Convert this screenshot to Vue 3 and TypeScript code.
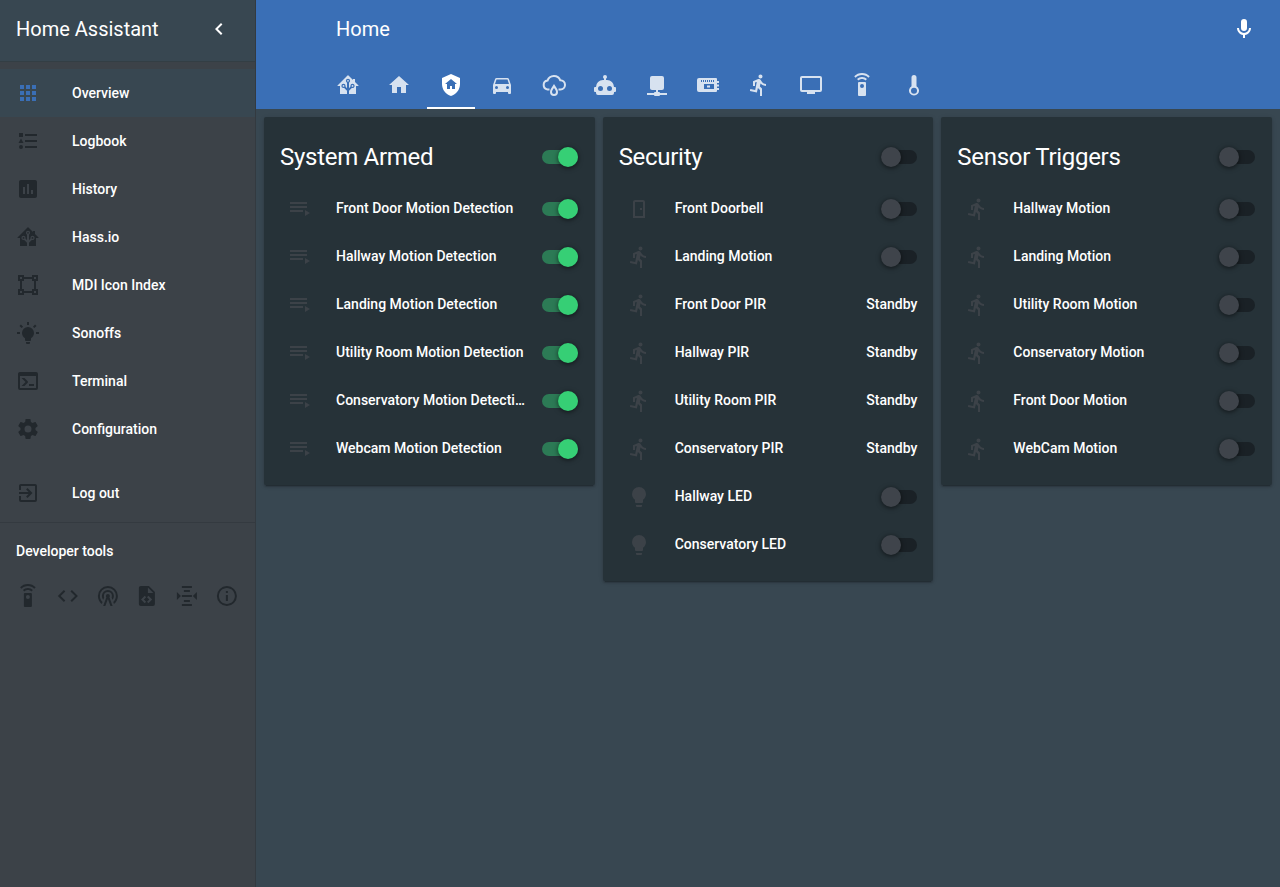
<template>
  <div class="shell">
    <aside class="sidebar">
      <div class="side-head">
        <span class="side-title">Home Assistant</span>
        <svg class="chevron" viewBox="0 0 24 24"><path :d="ICONS.chevron" /></svg>
      </div>
      <nav class="side-nav">
        <a v-for="item in NAV" :key="item.label" :class="['side-item', { active: item.active }]">
          <svg class="side-icon" viewBox="0 0 24 24"><path :d="ICONS[item.icon]" /></svg>
          <span>{{ item.label }}</span>
        </a>
      </nav>
      <a class="side-item logout">
        <svg class="side-icon" viewBox="0 0 24 24"><path :d="ICONS.logout" /></svg>
        <span>Log out</span>
      </a>
      <div class="dev-title">Developer tools</div>
      <div class="dev-tools">
        <svg v-for="t in DEV_TOOLS" :key="t" class="dev-icon" viewBox="0 0 24 24"><path :d="ICONS[t]" /></svg>
      </div>
    </aside>

    <div class="content">
      <header class="topbar">
        <div class="top-row">
          <span class="top-title">Home</span>
          <svg class="mic" viewBox="0 0 24 24"><path :d="ICONS.mic" /></svg>
        </div>
        <div class="tabs">
          <div v-for="(t, i) in TABS" :key="t" :class="['tab', { selected: i === 2 }]">
            <svg v-if="t === 'cloudDrop'" class="tab-icon" viewBox="0 0 24 24">
              <path class="line" d="M7.5 16.5H5.5A4.5 4.5 0 0 1 5.5 7.6 6.8 6.8 0 0 1 18.3 7.3 4.6 4.6 0 0 1 18.5 16.5H16.5" />
              <path d="M12 11C14 14 16 16.5 16 19A4 4 0 0 1 8 19C8 16.5 10 14 12 11ZM12 15C11 16.5 10 17.8 10 19A2 2 0 0 0 14 19C14 17.8 13 16.5 12 15Z" fill-rule="evenodd" />
            </svg>
            <svg v-else class="tab-icon" viewBox="0 0 24 24"><path :d="ICONS[t]" fill-rule="evenodd" /></svg>
          </div>
        </div>
      </header>

      <main class="cards">
        <section v-for="card in CARDS" :key="card.title" class="card">
          <div class="card-head">
            <h2>{{ card.title }}</h2>
            <div :class="['toggle', { on: card.on }]"><i /></div>
          </div>
          <div v-for="row in card.rows" :key="row.name" class="row">
            <span class="badge">
              <svg viewBox="0 0 24 24"><path :d="ICONS[row.icon]" /></svg>
            </span>
            <span class="name">{{ row.name }}</span>
            <span v-if="row.state" class="state">{{ row.state }}</span>
            <div v-else :class="['toggle', { on: card.on }]"><i /></div>
          </div>
        </section>
      </main>
    </div>
  </div>
</template>

<script setup lang="ts">
interface Row {
  name: string
  icon: string
  state?: string
}

const ICONS: Record<string, string> = {
  chevron: 'M15.41,16.58L10.83,12L15.41,7.41L14,6L8,12L14,18L15.41,16.58Z',
  mic: 'M12,2A3,3 0 0,1 15,5V11A3,3 0 0,1 12,14A3,3 0 0,1 9,11V5A3,3 0 0,1 12,2M19,11C19,14.53 16.39,17.44 13,17.93V21H11V17.93C7.61,17.44 5,14.53 5,11H7A5,5 0 0,0 12,16A5,5 0 0,0 17,11H19Z',
  apps: 'M16,20H20V16H16M16,14H20V10H16M10,8H14V4H10M16,8H20V4H16M10,14H14V10H10M4,14H8V10H4M4,20H8V16H4M10,20H14V16H10M4,8H8V4H4V8Z',
  logbook: 'M5,9.5L7.5,14H2.5L5,9.5M3,4H7V8H3V4M5,20A2,2 0 0,0 7,18A2,2 0 0,0 5,16A2,2 0 0,0 3,18A2,2 0 0,0 5,20M9,5V7H21V5H9M9,19H21V17H9V19M9,13H21V11H9V13Z',
  history: 'M9 17H7V10H9V17M13 17H11V7H13V17M17 17H15V13H17V17M19 3H5C3.89 3 3 3.89 3 5V19C3 20.1 3.89 21 5 21H19C20.1 21 21 20.1 21 19V5C21 3.89 20.1 3 19 3Z',
  hass: 'M21.8,13H20V21H13V17.67L15.79,14.88L16.5,15C17.66,15 18.6,14.06 18.6,12.9C18.6,11.74 17.66,10.8 16.5,10.8A2.1,2.1 0 0,0 14.4,12.9L14.5,13.61L13,15.13V9.65C13.66,9.29 14.1,8.6 14.1,7.8A2.1,2.1 0 0,0 12,5.7A2.1,2.1 0 0,0 9.9,7.8C9.9,8.6 10.34,9.29 11,9.65V15.13L9.5,13.61L9.6,12.9A2.1,2.1 0 0,0 7.5,10.8A2.1,2.1 0 0,0 5.4,12.9A2.1,2.1 0 0,0 7.5,15L8.21,14.88L11,17.67V21H4V13H2.25C1.83,13 1.42,13 1.42,12.79C1.43,12.57 1.85,12.15 2.28,11.72L11,3C11.33,2.67 11.67,2.33 12,2.33C12.33,2.33 12.67,2.67 13,3L17,7V6H19V9L21.78,11.78C22.18,12.18 22.59,12.59 22.6,12.8C22.6,13 22.2,13 21.8,13M7.5,12A0.9,0.9 0 0,1 8.4,12.9A0.9,0.9 0 0,1 7.5,13.8A0.9,0.9 0 0,1 6.6,12.9A0.9,0.9 0 0,1 7.5,12M16.5,12C17,12 17.4,12.4 17.4,12.9C17.4,13.4 17,13.8 16.5,13.8A0.9,0.9 0 0,1 15.6,12.9A0.9,0.9 0 0,1 16.5,12M12,6.9C12.5,6.9 12.9,7.3 12.9,7.8C12.9,8.3 12.5,8.7 12,8.7C11.5,8.7 11.1,8.3 11.1,7.8C11.1,7.3 11.5,6.9 12,6.9Z',
  vector: 'M2,2H8V4H16V2H22V8H20V16H22V22H16V20H8V22H2V16H4V8H2V2M16,8V6H8V8H6V16H8V18H16V16H18V8H16M4,4V6H6V4H4M18,4V6H20V4H18M4,18V20H6V18H4M18,18V20H20V18H18Z',
  bulbOn: 'M12,6A6,6 0 0,1 18,12C18,14.22 16.79,16.16 15,17.2V19A1,1 0 0,1 14,20H10A1,1 0 0,1 9,19V17.2C7.21,16.16 6,14.22 6,12A6,6 0 0,1 12,6M14,21V22A1,1 0 0,1 13,23H11A1,1 0 0,1 10,22V21H14M20,11H23V13H20V11M1,11H4V13H1V11M13,1V4H11V1H13M4.92,3.5L7.05,5.64L5.63,7.05L3.5,4.93L4.92,3.5M16.95,5.63L19.07,3.5L20.5,4.93L18.37,7.05L16.95,5.63Z',
  console: 'M20,19V7H4V19H20M20,3A2,2 0 0,1 22,5V19A2,2 0 0,1 20,21H4A2,2 0 0,1 2,19V5C2,3.89 2.9,3 4,3H20M13,17V15H18V17H13M9.58,13L5.57,9H8.4L11.7,12.3C12.09,12.69 12.09,13.33 11.7,13.72L8.42,17H5.59L9.58,13Z',
  cog: 'M12,15.5A3.5,3.5 0 0,1 8.5,12A3.5,3.5 0 0,1 12,8.5A3.5,3.5 0 0,1 15.5,12A3.5,3.5 0 0,1 12,15.5M19.43,12.97C19.47,12.65 19.5,12.33 19.5,12C19.5,11.67 19.47,11.34 19.43,11L21.54,9.37C21.73,9.22 21.78,8.95 21.66,8.73L19.66,5.27C19.54,5.05 19.27,4.96 19.05,5.05L16.56,6.05C16.04,5.66 15.5,5.32 14.87,5.07L14.5,2.42C14.46,2.18 14.25,2 14,2H10C9.75,2 9.54,2.18 9.5,2.42L9.13,5.07C8.5,5.32 7.96,5.66 7.44,6.05L4.95,5.05C4.73,4.96 4.46,5.05 4.34,5.27L2.34,8.73C2.21,8.95 2.27,9.22 2.46,9.37L4.57,11C4.53,11.34 4.5,11.67 4.5,12C4.5,12.33 4.53,12.65 4.57,12.97L2.46,14.63C2.27,14.78 2.21,15.05 2.34,15.27L4.34,18.73C4.46,18.95 4.73,19.03 4.95,18.95L7.44,17.94C7.96,18.34 8.5,18.68 9.13,18.93L9.5,21.58C9.54,21.82 9.75,22 10,22H14C14.25,22 14.46,21.82 14.5,21.58L14.87,18.93C15.5,18.67 16.04,18.34 16.56,17.94L19.05,18.95C19.27,19.03 19.54,18.95 19.66,18.73L21.66,15.27C21.78,15.05 21.73,14.78 21.54,14.63L19.43,12.97Z',
  logout: 'M10.09,15.59L11.5,17L16.5,12L11.5,7L10.09,8.41L12.67,11H3V13H12.67L10.09,15.59M19,3H5C3.89,3 3,3.9 3,5V9H5V5H19V19H5V15H3V19A2,2 0 0,0 5,21H19A2,2 0 0,0 21,19V5C21,3.9 20.1,3 19,3Z',
  remote: 'M12,0C8.96,0 6.21,1.23 4.22,3.22L5.63,4.63C7.26,3 9.5,2 12,2C14.5,2 16.74,3 18.36,4.64L19.77,3.23C17.79,1.23 15.04,0 12,0M7.05,6.05L8.46,7.46C9.37,6.56 10.62,6 12,6C13.38,6 14.63,6.56 15.54,7.46L16.95,6.05C15.68,4.78 13.93,4 12,4C10.07,4 8.32,4.78 7.05,6.05M12,15A2,2 0 0,1 10,13A2,2 0 0,1 12,11A2,2 0 0,1 14,13A2,2 0 0,1 12,15M15,9H9A1,1 0 0,0 8,10V22A1,1 0 0,0 9,23H15A1,1 0 0,0 16,22V10A1,1 0 0,0 15,9Z',
  code: 'M14.6,16.6L19.2,12L14.6,7.4L16,6L22,12L16,18L14.6,16.6M9.4,16.6L4.8,12L9.4,7.4L8,6L2,12L8,18L9.4,16.6Z',
  tower: 'M12,10A2,2 0 0,1 14,12C14,12.5 13.82,12.94 13.53,13.29L16.7,22H14.57L12,14.93L9.43,22H7.3L10.47,13.29C10.18,12.94 10,12.5 10,12A2,2 0 0,1 12,10M12,8A4,4 0 0,0 8,12C8,12.5 8.1,13 8.28,13.46L7.4,15.86C6.53,14.81 6,13.47 6,12A6,6 0 0,1 12,6A6,6 0 0,1 18,12C18,13.47 17.47,14.81 16.6,15.86L15.72,13.46C15.9,13 16,12.5 16,12A4,4 0 0,0 12,8M12,4A8,8 0 0,0 4,12C4,14.36 5,16.5 6.64,17.94L5.92,19.94C3.54,18.11 2,15.23 2,12A10,10 0 0,1 12,2A10,10 0 0,1 22,12C22,15.23 20.46,18.11 18.08,19.94L17.36,17.94C19,16.5 20,14.36 20,12A8,8 0 0,0 12,4Z',
  fileXml: 'M13,9H18.5L13,3.5V9M6,2H14L20,8V20A2,2 0 0,1 18,22H6C4.89,22 4,21.1 4,20V4C4,2.89 4.89,2 6,2M6.12,15.5L9.86,19.24L11.28,17.83L8.95,15.5L11.28,13.17L9.86,11.76L6.12,15.5M17.28,15.5L13.54,11.76L12.12,13.17L14.45,15.5L12.12,17.83L13.54,19.24L17.28,15.5Z',
  mqtt: 'M7,2H17V4H7V2M9,6H15V8H9V6M7,11H17V13H7V11M9,16H15V18H9V16M7,20H17V22H7V20M2,8V16L6,12L2,8M22,8V16L18,12L22,8Z',
  info: 'M11,9H13V7H11M12,20C7.59,20 4,16.41 4,12C4,7.59 7.59,4 12,4C16.41,4 20,7.59 20,12C20,16.41 16.41,20 12,20M12,2A10,10 0 0,0 2,12A10,10 0 0,0 12,22A10,10 0 0,0 22,12A10,10 0 0,0 12,2M11,17H13V11H11V17Z',
  home: 'M10,20V14H14V20H19V12H22L12,3L2,12H5V20H10Z',
  shieldHome: 'M11,13H13V16H16V11H18L12,6L6,11H8V16H11V13M12,1L21,5V11C21,16.55 17.16,21.74 12,23C6.84,21.74 3,16.55 3,11V5L12,1Z',
  car: 'M5,11L6.5,6.5H17.5L19,11M17.5,16A1.5,1.5 0 0,1 16,14.5A1.5,1.5 0 0,1 17.5,13A1.5,1.5 0 0,1 19,14.5A1.5,1.5 0 0,1 17.5,16M6.5,16A1.5,1.5 0 0,1 5,14.5A1.5,1.5 0 0,1 6.5,13A1.5,1.5 0 0,1 8,14.5A1.5,1.5 0 0,1 6.5,16M18.92,6C18.72,5.42 18.16,5 17.5,5H6.5C5.84,5 5.28,5.42 5.08,6L3,12V20A1,1 0 0,0 4,21H5A1,1 0 0,0 6,20V19H18V20A1,1 0 0,0 19,21H20A1,1 0 0,0 21,20V12L18.92,6Z',
  robot: 'M12,2A2,2 0 0,1 14,4C14,4.74 13.6,5.39 13,5.73V7H14A7,7 0 0,1 21,14H22A1,1 0 0,1 23,15V18A1,1 0 0,1 22,19H21V20A2,2 0 0,1 19,22H5A2,2 0 0,1 3,20V19H2A1,1 0 0,1 1,18V15A1,1 0 0,1 2,14H3A7,7 0 0,1 10,7H11V5.73C10.4,5.39 10,4.74 10,4A2,2 0 0,1 12,2M7.5,13A2.5,2.5 0 0,0 5,15.5A2.5,2.5 0 0,0 7.5,18A2.5,2.5 0 0,0 10,15.5A2.5,2.5 0 0,0 7.5,13M16.5,13A2.5,2.5 0 0,0 14,15.5A2.5,2.5 0 0,0 16.5,18A2.5,2.5 0 0,0 19,15.5A2.5,2.5 0 0,0 16.5,13Z',
  network: 'M17,3A2,2 0 0,1 19,5V15A2,2 0 0,1 17,17H13V19H14A1,1 0 0,1 15,20H22V22H15A1,1 0 0,1 14,23H10A1,1 0 0,1 9,22H2V20H9A1,1 0 0,1 10,19H11V17H7C5.89,17 5,16.1 5,15V5A2,2 0 0,1 7,3H17Z',
  pi: 'M3,5H20A1,1 0 0,1 21,6V8H23V10H21V11.5H23V13.5H21V15H23V17H21V18A1,1 0 0,1 20,19H3A2,2 0 0,1 1,17V7A2,2 0 0,1 3,5ZM5,7H6V9H5ZM7,7H8V9H7ZM9,7H10V9H9ZM11,7H12V9H11ZM13,7H14V9H13ZM15,7H16V9H15ZM17,7H18V9H17ZM8,11H18V16H8ZM11,12.5H14V14.5H11Z',
  run: 'M13.5,5.5C14.59,5.5 15.5,4.58 15.5,3.5C15.5,2.38 14.59,1.5 13.5,1.5C12.39,1.5 11.5,2.38 11.5,3.5C11.5,4.58 12.39,5.5 13.5,5.5M9.89,19.38L10.89,15L13,17V23H15V15.5L12.89,13.5L13.5,10.5C14.79,12 16.79,13 19,13V11C17.09,11 15.5,10 14.69,8.58L13.69,7C13.29,6.38 12.69,6 12,6C11.69,6 11.5,6.08 11.19,6.08L6,8.28V13H8V9.58L9.79,8.88L8.19,17L3.29,16L2.89,18L9.89,19.38Z',
  tv: 'M21,17H3V5H21M21,3H3A2,2 0 0,0 1,5V17A2,2 0 0,0 3,19H8V21H16V19H21A2,2 0 0,0 23,17V5A2,2 0 0,0 21,3Z',
  thermo: 'M14.5,13.2V4.5A2.5,2.5 0 0,0 9.5,4.5V13.2A5,5 0 1,0 14.5,13.2ZM12,14.7A3,3 0 1,1 12,20.7A3,3 0 1,1 12,14.7Z',
  playlist: 'M19,9H2V11H19V9M19,5H2V7H19V5M2,15H15V13H2V15M17,13V19L22,16L17,13Z',
  door: 'M8,3C6.89,3 6,3.89 6,5V21H18V5C18,3.89 17.11,3 16,3H8M8,5H16V19H8V5M13,11V13H15V11H13Z',
  bulb: 'M12,2A7,7 0 0,0 5,9C5,11.38 6.19,13.47 8,14.74V17A1,1 0 0,0 9,18H15A1,1 0 0,0 16,17V14.74C17.81,13.47 19,11.38 19,9A7,7 0 0,0 12,2M9,21A1,1 0 0,0 10,22H14A1,1 0 0,0 15,21V20H9V21Z',
}

const NAV = [
  { label: 'Overview', icon: 'apps', active: true },
  { label: 'Logbook', icon: 'logbook' },
  { label: 'History', icon: 'history' },
  { label: 'Hass.io', icon: 'hass' },
  { label: 'MDI Icon Index', icon: 'vector' },
  { label: 'Sonoffs', icon: 'bulbOn' },
  { label: 'Terminal', icon: 'console' },
  { label: 'Configuration', icon: 'cog' },
]

const DEV_TOOLS = ['remote', 'code', 'tower', 'fileXml', 'mqtt', 'info']

const TABS = ['hass', 'home', 'shieldHome', 'car', 'cloudDrop', 'robot', 'network', 'pi', 'run', 'tv', 'remote', 'thermo']

function rows(icon: string, names: string[], state?: string): Row[] {
  return names.map(name => ({ name, icon, state }))
}

const CARDS: { title: string; on: boolean; rows: Row[] }[] = [
  {
    title: 'System Armed',
    on: true,
    rows: rows('playlist', [
      'Front Door Motion Detection',
      'Hallway Motion Detection',
      'Landing Motion Detection',
      'Utility Room Motion Detection',
      'Conservatory Motion Detection',
      'Webcam Motion Detection',
    ]),
  },
  {
    title: 'Security',
    on: false,
    rows: [
      { name: 'Front Doorbell', icon: 'door' },
      { name: 'Landing Motion', icon: 'run' },
      ...rows('run', ['Front Door PIR', 'Hallway PIR', 'Utility Room PIR', 'Conservatory PIR'], 'Standby'),
      { name: 'Hallway LED', icon: 'bulb' },
      { name: 'Conservatory LED', icon: 'bulb' },
    ],
  },
  {
    title: 'Sensor Triggers',
    on: false,
    rows: rows('run', [
      'Hallway Motion',
      'Landing Motion',
      'Utility Room Motion',
      'Conservatory Motion',
      'Front Door Motion',
      'WebCam Motion',
    ]),
  },
]
</script>

<style>
html, body { margin: 0; background: #384751; }
</style>

<style scoped>
.shell {
  display: flex; height: 887px; overflow: hidden;
  font-family: Roboto, "Noto Sans", sans-serif; color: #fff;
}

.sidebar {
  width: 255px; flex: none; background: #3c4248;
  border-right: 1px solid #333a40;
  display: flex; flex-direction: column;
}
.side-head {
  height: 62px; background: #384751; border-bottom: 1px solid #333e44;
  display: flex; align-items: center; padding: 0 0 4px 16px; box-sizing: border-box;
  justify-content: space-between;
}
.side-title { font-size: 20px; line-height: 24px; }
.chevron { width: 24px; height: 24px; fill: #fff; margin-right: 24px; }

.side-nav { padding-top: 7px; }
.side-item {
  height: 48px; display: flex; align-items: center;
  font-size: 14px; font-weight: 500; padding-left: 16px;
}
.side-item.active { background: #384751; }
.side-item.active .side-icon { fill: #3a6fb6; }
.side-icon { width: 24px; height: 24px; fill: #22282d; margin-right: 32px; flex: none; }
.logout { margin-top: 16px; }

.dev-title {
  margin-top: 5px; border-top: 1px solid #343a40;
  padding: 20px 16px 0; font-size: 14px; line-height: 16px; font-weight: 500;
}
.dev-tools { display: flex; padding: 25px 8px 0; }
.dev-icon { width: 24px; height: 24px; fill: #22282d; padding: 0 7.9px; flex: none; }

.content { flex: 1; min-width: 0; }

.topbar { height: 109px; background: #3a6fb6; box-sizing: border-box; }
.top-row {
  height: 60px; display: flex; align-items: center; justify-content: space-between;
  padding: 0 24px 2px 80px; box-sizing: border-box;
}
.top-title { font-size: 20px; }
.mic { width: 24px; height: 24px; fill: #fff; }

.tabs { display: flex; padding-left: 66.3px; height: 49px; }
.tab {
  width: 51.43px; flex: none; height: 49px; box-sizing: border-box; position: relative;
  display: flex; align-items: flex-start; justify-content: center; padding-top: 13px;
}
.tab-icon { width: 24px; height: 24px; fill: #fff; opacity: .8; }
.tab-icon .line { fill: none; stroke: #fff; stroke-width: 2; }
.tab.selected .tab-icon { opacity: 1; }
.tab.selected::after {
  content: ''; position: absolute; left: 2px; right: 2px; bottom: 0; height: 2px; background: #fff;
}

.cards {
  display: grid; grid-template-columns: repeat(3, minmax(0, 1fr)); gap: 8px;
  padding: 8px; align-items: start;
}
.card {
  background: #263238; border-radius: 2px; padding: 0 16px 13px;
  box-shadow: 0 2px 2px rgba(0, 0, 0, .14), 0 1px 5px rgba(0, 0, 0, .12), 0 3px 1px -2px rgba(0, 0, 0, .2);
}
.card-head {
  height: 67px; display: flex; align-items: center; justify-content: space-between;
  padding-top: 13px; box-sizing: border-box;
}
.card-head h2 { margin: 0; font-size: 24px; font-weight: 400; letter-spacing: -.012em; }

.row { height: 48px; display: flex; align-items: center; font-size: 14px; }
.badge { width: 40px; flex: none; margin: 2px 16px 0 0; display: flex; justify-content: center; }
.badge svg { width: 24px; height: 24px; fill: #3c4248; }
.name { flex: 1; min-width: 0; white-space: nowrap; overflow: hidden; text-overflow: ellipsis; font-weight: 500; }
.state { margin-left: 16px; font-weight: 500; }

.toggle {
  width: 36px; height: 14px; border-radius: 7px; background: #1a2126; position: relative;
  flex: none; margin: 0 .7px 0 16px;
}
.row .toggle { margin-top: 2px; }
.toggle i {
  position: absolute; left: 0; top: -3px; width: 20px; height: 20px; border-radius: 50%;
  background: #3f444b; box-shadow: 0 1px 5px rgba(0, 0, 0, .6);
}
.toggle.on { background: #2c7a55; }
.toggle.on i { left: 16px; background: #36cf75; }
</style>
